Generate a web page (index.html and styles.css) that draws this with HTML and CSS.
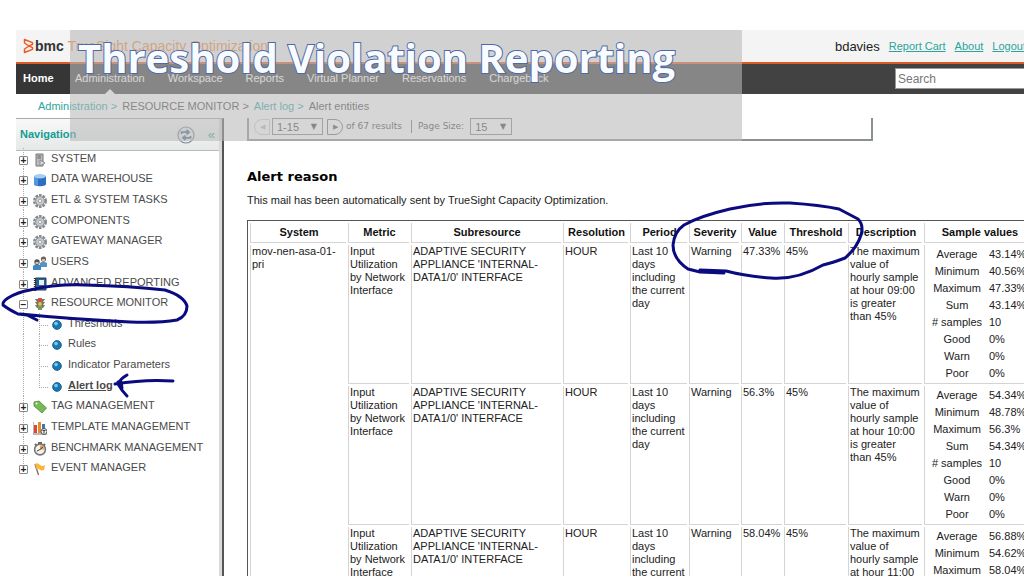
FILE: index.html
```
<!DOCTYPE html>
<html lang="en">
<head>
  <meta charset="UTF-8">
  <title>Threshold Violation Reporting</title>
  <link rel="stylesheet" href="styles.css">
</head>
<body>

  <svg class="defs" aria-hidden="true">
    <symbol id="gear" viewBox="0 0 14 14">
      <circle cx="7" cy="7" r="5.7" fill="none" stroke="#858a8e" stroke-width="2.6" stroke-dasharray="2.6 1"/>
      <circle cx="7" cy="7" r="4.4" fill="#c6cacd" stroke="#92979b" stroke-width="1"/>
      <circle cx="7" cy="7" r="1.6" fill="#fff" stroke="#92979b" stroke-width=".8"/>
    </symbol>
    <symbol id="ball" viewBox="0 0 10 10">
      <circle cx="5" cy="5" r="4.4" fill="#1778b4" stroke="#17527f" stroke-width=".8"/>
      <circle cx="4" cy="3.6" r="1.8" fill="#79c8ee"/>
    </symbol>
  </svg>

  <div class="page">
    <header class="topbar">
      <svg class="logo" viewBox="0 0 12 16">
        <path d="M1.5 1.5 L9.5 4.6 V6.4 L6 8 L9.5 9.6 V11.4 L1.5 14.5 V11 L6 8 L1.5 5 Z" fill="none" stroke="#ee5a24" stroke-width="1.5" stroke-linejoin="round"/>
      </svg>
      <span class="brand">bmc</span>
      <span class="product">TrueSight Capacity Optimization</span>
      <div class="user">
        <span class="username">bdavies</span>
        <a href="#">Report Cart</a>
        <a href="#">About</a>
        <a href="#">Logout</a>
      </div>
    </header>

    <nav class="menu">
      <a class="home" href="#">Home</a>
      <a class="active" href="#">Administration</a>
      <a href="#">Workspace</a>
      <a href="#">Reports</a>
      <a href="#">Virtual Planner</a>
      <a href="#">Reservations</a>
      <a href="#">Chargeback</a>
      <input type="text" placeholder="Search" aria-label="Search">
    </nav>

    <div class="breadcrumb">
      <a href="#">Administration &gt;</a>
      <span>RESOURCE MONITOR &gt;</span>
      <a href="#">Alert log &gt;</a>
      <span>Alert entities</span>
    </div>

    <div class="columns">
      <aside class="sidebar">
        <div class="sidebar-head">
          <h2>Navigation</h2>
          <button class="refresh" aria-label="Refresh">
            <svg viewBox="0 0 18 18">
              <circle cx="9" cy="9" r="8" fill="#e9edef" stroke="#7b8790" stroke-width="1.2"/>
              <path d="M4.5 8 V6.2 H11 M9.5 3.8 L12 6.2 L9.5 8.4 M13.5 10 V11.8 H7 M8.5 9.6 L6 11.8 L8.5 14.2" fill="none" stroke="#4d6c80" stroke-width="1.8"/>
            </svg>
          </button>
          <button class="collapse" aria-label="Collapse">«</button>
        </div>
        <ul class="tree">
          <li><span class="toggle">+</span>
            <svg viewBox="0 0 14 14"><path d="M3 1H10V13H3Z" fill="#b9bbbc" stroke="#777"/><path d="M4.5 3H8M4.5 5H8" stroke="#666"/><path d="M7 7L12 10L7 13Z" fill="#ddd" stroke="#888"/></svg>
            <a href="#">SYSTEM</a></li>
          <li><span class="toggle">+</span>
            <svg viewBox="0 0 14 14"><path d="M1 3V11C1 14 13 14 13 11V3Z" fill="#2d6fc0"/><path d="M1 3V11C1 12 3 13 5 13V4Z" fill="#5597de"/><ellipse cx="7" cy="3.2" rx="6" ry="2.2" fill="#a7cdf1"/></svg>
            <a href="#">DATA WAREHOUSE</a></li>
          <li><span class="toggle">+</span><svg><use href="#gear"/></svg><a href="#">ETL &amp; SYSTEM TASKS</a></li>
          <li><span class="toggle">+</span><svg><use href="#gear"/></svg><a href="#">COMPONENTS</a></li>
          <li><span class="toggle">+</span><svg><use href="#gear"/></svg><a href="#">GATEWAY MANAGER</a></li>
          <li><span class="toggle">+</span>
            <svg viewBox="0 0 14 14"><path d="M7 11V7Q10 4 14 7V11Z" fill="#5a93bd"/><circle cx="10.5" cy="3" r="2.6" fill="#6b6259"/><path d="M9 3H12V5H9Z" fill="#dfbd98"/><path d="M0 14V10Q4 6 8 10V14Z" fill="#3b88c4"/><circle cx="4" cy="6" r="2.7" fill="#555"/><path d="M2.5 6H5.5V8H2.5Z" fill="#e3c39f"/></svg>
            <a href="#">USERS</a></li>
          <li><span class="toggle">+</span>
            <svg viewBox="0 0 14 14"><path d="M2.5 1H13V13H2.5Z" fill="#2a6294" stroke="#1f3f5f"/><path d="M6 3H11V8H6Z" fill="#e8f0f6"/><path d="M2 1V14" stroke="#333" stroke-width="2.4" stroke-dasharray="1 1"/></svg>
            <a href="#">ADVANCED REPORTING</a></li>
          <li><span class="toggle">−</span>
            <svg viewBox="0 0 14 14"><path d="M2 2H12L10 5H12L10 8H12L10 11H4L2 8H4L2 5H4Z" fill="#77755f"/><path d="M5 1H9V13H5Z" fill="#8d8a70"/><circle cx="7" cy="3" r="2" fill="#d94838"/><circle cx="7" cy="7" r="1.8" fill="#e9bd45"/><circle cx="7" cy="11" r="1.8" fill="#62a552"/></svg>
            <a href="#">RESOURCE MONITOR</a></li>
          <li class="child"><svg><use href="#ball"/></svg><a href="#">Thresholds</a></li>
          <li class="child"><svg><use href="#ball"/></svg><a href="#">Rules</a></li>
          <li class="child"><svg><use href="#ball"/></svg><a href="#">Indicator Parameters</a></li>
          <li class="child last"><svg><use href="#ball"/></svg><a class="current" href="#">Alert log</a></li>
          <li><span class="toggle">+</span>
            <svg viewBox="0 0 14 14"><path d="M1 2L6 1L13.5 8L9 13L1 6Z" fill="#76b956" stroke="#4a8a38" stroke-width=".8"/><circle cx="3.5" cy="3.5" r="1" fill="#fff"/></svg>
            <a href="#">TAG MANAGEMENT</a></li>
          <li><span class="toggle">+</span>
            <svg viewBox="0 0 14 14"><path d="M0 1V13H14" fill="none" stroke="#777"/><path d="M1 4H4V12H1Z" fill="#d84a32"/><path d="M5 1H8V12H5Z" fill="#e98a2f"/><path d="M9 3H12V12H9Z" fill="#3a76b8"/><circle cx="11" cy="10.5" r="3" fill="#eee" stroke="#555"/><path d="M9.5 9.5H12.5M11 9.5V12.5" stroke="#444"/></svg>
            <a href="#">TEMPLATE MANAGEMENT</a></li>
          <li><span class="toggle">+</span>
            <svg viewBox="0 0 14 14"><path d="M2 2L4 4M12 2L10 4M5 1H9" stroke="#666" stroke-width="2"/><circle cx="7" cy="7.5" r="5.4" fill="#f1f1ee" stroke="#777" stroke-width="1.6"/><path d="M7 7.5V3.5A4 4 0 0 1 11 7.5Z" fill="#f19a3e"/><path d="M7 7.5L10 5M7 7.5L4 9" stroke="#444"/></svg>
            <a href="#">BENCHMARK MANAGEMENT</a></li>
          <li class="end"><span class="toggle">+</span>
            <svg viewBox="0 0 14 14"><path d="M2 2L5.5 13" stroke="#8b7355" stroke-width="1.4"/><path d="M2 2Q5 0 7 3Q9 5 12 3L11 8Q8 9 6.5 7.5Q5 6 3.5 7Z" fill="#f6b73c"/></svg>
            <a href="#">EVENT MANAGER</a></li>
        </ul>
      </aside>

      <main>
        <div class="pager">
          <button class="prev" aria-label="Previous page" disabled>◀</button>
          <span class="select range"><select aria-label="Results range"><option>1-15</option></select></span>
          <button class="next" aria-label="Next page">▶</button>
          <span class="total">of 67 results</span>
          <label for="size">Page Size:</label>
          <span class="select"><select id="size"><option>15</option></select></span>
        </div>

        <h1>Alert reason</h1>
        <p>This mail has been automatically sent by TrueSight Capacity Optimization.</p>

        <table class="alerts">
          <thead>
            <tr>
              <th class="c-system">System</th>
              <th class="c-metric">Metric</th>
              <th class="c-sub">Subresource</th>
              <th class="c-res">Resolution</th>
              <th class="c-period">Period</th>
              <th class="c-sev">Severity</th>
              <th class="c-value">Value</th>
              <th class="c-thr">Threshold</th>
              <th class="c-desc">Description</th>
              <th class="c-sample">Sample values</th>
            </tr>
          </thead>
          <tbody>
            <tr>
              <td rowspan="3">mov-nen-asa-01-pri</td>
              <td>Input Utilization by Network Interface</td>
              <td>ADAPTIVE SECURITY APPLIANCE 'INTERNAL-DATA1/0' INTERFACE</td>
              <td>HOUR</td>
              <td>Last 10 days including the current day</td>
              <td>Warning</td>
              <td>47.33%</td>
              <td>45%</td>
              <td>The maximum<br>value of<br>hourly sample<br>at hour 09:00<br>is greater<br>than 45%</td>
              <td>
                <table class="samples">
                  <tr><th>Average</th><td>43.14%</td></tr>
                  <tr><th>Minimum</th><td>40.56%</td></tr>
                  <tr><th>Maximum</th><td>47.33%</td></tr>
                  <tr><th>Sum</th><td>43.14%</td></tr>
                  <tr><th># samples</th><td>10</td></tr>
                  <tr><th>Good</th><td>0%</td></tr>
                  <tr><th>Warn</th><td>0%</td></tr>
                  <tr><th>Poor</th><td>0%</td></tr>
                </table>
              </td>
            </tr>
            <tr>
              <td>Input Utilization by Network Interface</td>
              <td>ADAPTIVE SECURITY APPLIANCE 'INTERNAL-DATA1/0' INTERFACE</td>
              <td>HOUR</td>
              <td>Last 10 days including the current day</td>
              <td>Warning</td>
              <td>56.3%</td>
              <td>45%</td>
              <td>The maximum<br>value of<br>hourly sample<br>at hour 10:00<br>is greater<br>than 45%</td>
              <td>
                <table class="samples">
                  <tr><th>Average</th><td>54.34%</td></tr>
                  <tr><th>Minimum</th><td>48.78%</td></tr>
                  <tr><th>Maximum</th><td>56.3%</td></tr>
                  <tr><th>Sum</th><td>54.34%</td></tr>
                  <tr><th># samples</th><td>10</td></tr>
                  <tr><th>Good</th><td>0%</td></tr>
                  <tr><th>Warn</th><td>0%</td></tr>
                  <tr><th>Poor</th><td>0%</td></tr>
                </table>
              </td>
            </tr>
            <tr>
              <td>Input Utilization by Network Interface</td>
              <td>ADAPTIVE SECURITY APPLIANCE 'INTERNAL-DATA1/0' INTERFACE</td>
              <td>HOUR</td>
              <td>Last 10 days including the current day</td>
              <td>Warning</td>
              <td>58.04%</td>
              <td>45%</td>
              <td>The maximum<br>value of<br>hourly sample<br>at hour 11:00</td>
              <td>
                <table class="samples">
                  <tr><th>Average</th><td>56.88%</td></tr>
                  <tr><th>Minimum</th><td>54.62%</td></tr>
                  <tr><th>Maximum</th><td>58.04%</td></tr>
                </table>
              </td>
            </tr>
          </tbody>
        </table>
      </main>
    </div>

    <div class="banner">Threshold Violation Reporting</div>

    <!-- pen marks -->
    <svg class="ink" width="1024" height="576" viewBox="0 0 1024 576">
      <path d="M37 320 L27 315 L18 314 Q8 309 3 305 Q2 302 8 298 Q18 292 30 290 Q55 284 85 285 Q130 286 165 290 Q184 296 187 306 Q187 316 177 320 Q160 323 130 322 Q70 319 20 314"/>
      <path d="M173 381 Q145 379 115 384 M127 375 Q120 379 118 384 Q122 391 127 396 M118 382 L122 388 L121 382"/>
      <path d="M724 273 L700 272 L688 269 Q673 259 673 245 Q674 232 684 225 Q700 216 730 209 Q760 202 790 203 Q820 205 839 209 L858 219 Q864 225 861 235 Q857 248 845 258 Q832 263 823 265 Q797 280 771 278 Q745 276 726 271 L700 270"/>
    </svg>
  </div>

</body>
</html>
```
FILE: styles.css
```
* {
  box-sizing: border-box;
}
body {
  margin: 0;
  font-family: "Liberation Sans", Arial, sans-serif;
  font-size: 11px;
  line-height: 13px;
  color: #222;
  background: #fff;
}
a {
  color: #2ba59c;
}
button {
  padding: 0;
  border: 0;
  background: none;
}
.defs {
  display: none;
}
.page {
  position: relative;
  height: 100vh;
  padding: 30px 0 0 16px;
  overflow: hidden;
  display: flex;
  flex-direction: column;
}

/* top bar */
.topbar {
  flex: none;
  display: flex;
  align-items: center;
  height: 34px;
  padding-left: 7px;
  background: #f4f4f4;
  border-bottom: 2px solid #dc5b24;
  white-space: nowrap;
}
.logo {
  width: 12px;
  height: 16px;
}
.brand {
  font-size: 14px;
  font-weight: bold;
  color: #333;
}
.product {
  margin-left: 4px;
  font-size: 14px;
  color: #f08a3c;
}
.user {
  display: flex;
  align-items: center;
  gap: 9px;
  margin: 0 -2px 0 auto;
}
.username {
  font-size: 13px;
}

/* menu */
.menu {
  flex: none;
  display: flex;
  align-items: stretch;
  height: 30px;
  background: #424242;
  white-space: nowrap;
}
.menu a {
  margin-right: 23px;
  line-height: 29px;
  color: #fff;
  text-decoration: none;
}
.menu .home {
  width: 54px;
  margin-right: 5px;
  padding-left: 7px;
  font-weight: bold;
  background: #363636;
}
.menu .active {
  display: flex;
  flex-direction: column;
  align-items: center;
}
.menu .active::after {
  content: "";
  margin-top: -4px;
  border: 5px solid transparent;
  border-top: 0;
  border-bottom-color: #fff;
}
.menu input {
  width: 150px;
  height: 21px;
  margin: 4px -21px 0 auto;
  padding: 1px 2px;
  border: 1px solid #999;
  font-family: inherit;
  font-size: 12px;
}
.menu input::placeholder {
  color: #777;
}

.breadcrumb {
  flex: none;
  display: flex;
  gap: 5px;
  height: 24px;
  padding-left: 22px;
  line-height: 25px;
  color: #444;
}
.breadcrumb a {
  text-decoration: none;
}

.columns {
  flex: 1;
  display: flex;
  min-height: 0;
}

/* navigation tree */
.sidebar {
  flex: none;
  width: 208px;
  border-top: 1px solid #aaa;
  border-right: 2px solid #555;
  box-shadow: inset -3px 0 #d9d9d9;
}
.sidebar-head {
  display: flex;
  align-items: center;
  height: 32px;
  margin-right: 3px;
  padding: 0 4px;
  background: linear-gradient(#f8f8f8, #e6e9e9);
  border-bottom: 1px solid #bbb;
}
.sidebar-head h2 {
  flex: 1;
  margin: 0;
  font-size: 11px;
  color: #159c92;
}
.refresh svg {
  display: block;
  width: 18px;
  height: 18px;
}
.collapse {
  margin-left: 13px;
  font-size: 13px;
  color: #2ba59c;
}
.tree {
  display: grid;
  grid-auto-rows: 1fr;
  height: 330px;
  margin: -3px 0 0;
  padding: 0;
  list-style: none;
  white-space: nowrap;
}
.tree li {
  display: flex;
  align-items: center;
  padding-left: 3px;
  background: repeating-linear-gradient(#aaa 0 1px, transparent 1px 2px) 7px 0 / 1px 100% no-repeat;
}
.tree li.end {
  background-size: 1px 50%;
}
.tree a {
  color: #4a4a4a;
  text-decoration: none;
}
.tree svg {
  width: 14px;
  height: 14px;
  margin: 3px 4px 0 0;
}
.toggle {
  width: 9px;
  height: 9px;
  margin-top: 4px;
  border: 1px solid #888;
  border-radius: 1px;
  background: #fff;
  font-size: 10px;
  font-weight: bold;
  line-height: 7px;
  text-align: center;
}
.toggle + svg {
  margin-left: 5px;
}
.tree .child::before {
  content: "";
  align-self: stretch;
  width: 10px;
  margin-left: 20px;
  background:
    repeating-linear-gradient(#aaa 0 1px, transparent 1px 2px) 0 0 / 1px 100% no-repeat,
    repeating-linear-gradient(90deg, #aaa 0 1px, transparent 1px 2px) 0 60% / 100% 1px no-repeat;
}
.tree .last::before {
  background-size: 1px 60%, 100% 1px;
}
.tree .child svg {
  width: 10px;
  height: 10px;
  margin: 3px 6px 0 3px;
}
.tree .current {
  font-weight: bold;
  text-decoration: underline;
}

/* report */
main {
  flex: 1;
  min-width: 0;
  padding-left: 23px;
}
.pager {
  display: flex;
  align-items: center;
  width: 626px;
  height: 23px;
  padding: 0 0 4px 5px;
  border: 2px solid #8a8f92;
  border-top: 0;
  font-family: "DejaVu Sans", sans-serif;
  font-size: 9px;
  color: #444;
}
.prev,
.next {
  width: 16px;
  height: 16px;
  border: 1px solid #777;
  font-size: 7px;
  color: #555;
}
.prev {
  border-color: #ccc;
  border-radius: 8px 0 0 8px;
  color: #bbb;
}
.next {
  border-radius: 0 8px 8px 0;
}
.select {
  display: grid;
  align-items: center;
  width: 42px;
  height: 17px;
  border: 1px solid #888;
}
.select::after {
  content: "▼";
  grid-area: 1 / 1;
  justify-self: end;
  margin-right: 5px;
  font-size: 8px;
  pointer-events: none;
}
.range {
  width: 51px;
  margin: 0 4px 0 2px;
}
.select select {
  grid-area: 1 / 1;
  width: 100%;
  padding: 0 0 0 4px;
  border: 0;
  background: none;
  appearance: none;
  font-family: "Liberation Sans", Arial, sans-serif;
  font-size: 11px;
  color: #444;
}
.total {
  margin-left: 3px;
  padding-right: 9px;
  border-right: 1px solid #777;
}
.pager label {
  margin: 0 6px;
}
h1 {
  margin: 28px 0 9px;
  font-family: "DejaVu Sans", sans-serif;
  font-size: 13px;
  line-height: 16px;
  color: #000;
}
p {
  margin: 0 0 13px;
}

.alerts {
  table-layout: fixed;
  width: 790px;
  border: 1px solid #555;
  border-spacing: 2px;
}
.alerts th,
.alerts td {
  padding: 0 0 0 1px;
  border: solid #d4d4d4;
  border-width: 0 0 1px 1px;
  vertical-align: top;
  text-align: left;
}
.alerts thead th {
  height: 20px;
  vertical-align: middle;
  text-align: center;
  color: #111;
}
.c-system { width: 96px; }
.c-metric { width: 61px; }
.c-sub { width: 150px; }
.c-res { width: 65px; }
.c-period { width: 57px; }
.c-sev { width: 50px; }
.c-value { width: 41px; }
.c-thr { width: 62px; }
.c-desc { width: 74px; }

.samples {
  border-spacing: 2px;
}
.alerts .samples th,
.alerts .samples td {
  padding: 1px;
  border: 0;
}
.alerts .samples th {
  width: 58px;
  font-weight: normal;
  text-align: center;
}

/* slide title and pen marks lie over the page */
.banner {
  position: absolute;
  top: 30px;
  left: 70px;
  width: 672px;
  height: 111px;
  padding-left: 8px;
  background: rgba(184, 184, 184, .58);
  font-family: "Open Sans", sans-serif;
  font-size: 40px;
  font-weight: 700;
  line-height: 56px;
  white-space: nowrap;
  color: #f8fbff;
  -webkit-text-stroke: 2px #4f69a6;
  paint-order: stroke fill;
}
.ink {
  position: absolute;
  top: 0;
  left: 0;
  fill: none;
  stroke: #0b0b80;
  stroke-width: 3;
  stroke-linecap: round;
  stroke-linejoin: round;
  pointer-events: none;
}
```
